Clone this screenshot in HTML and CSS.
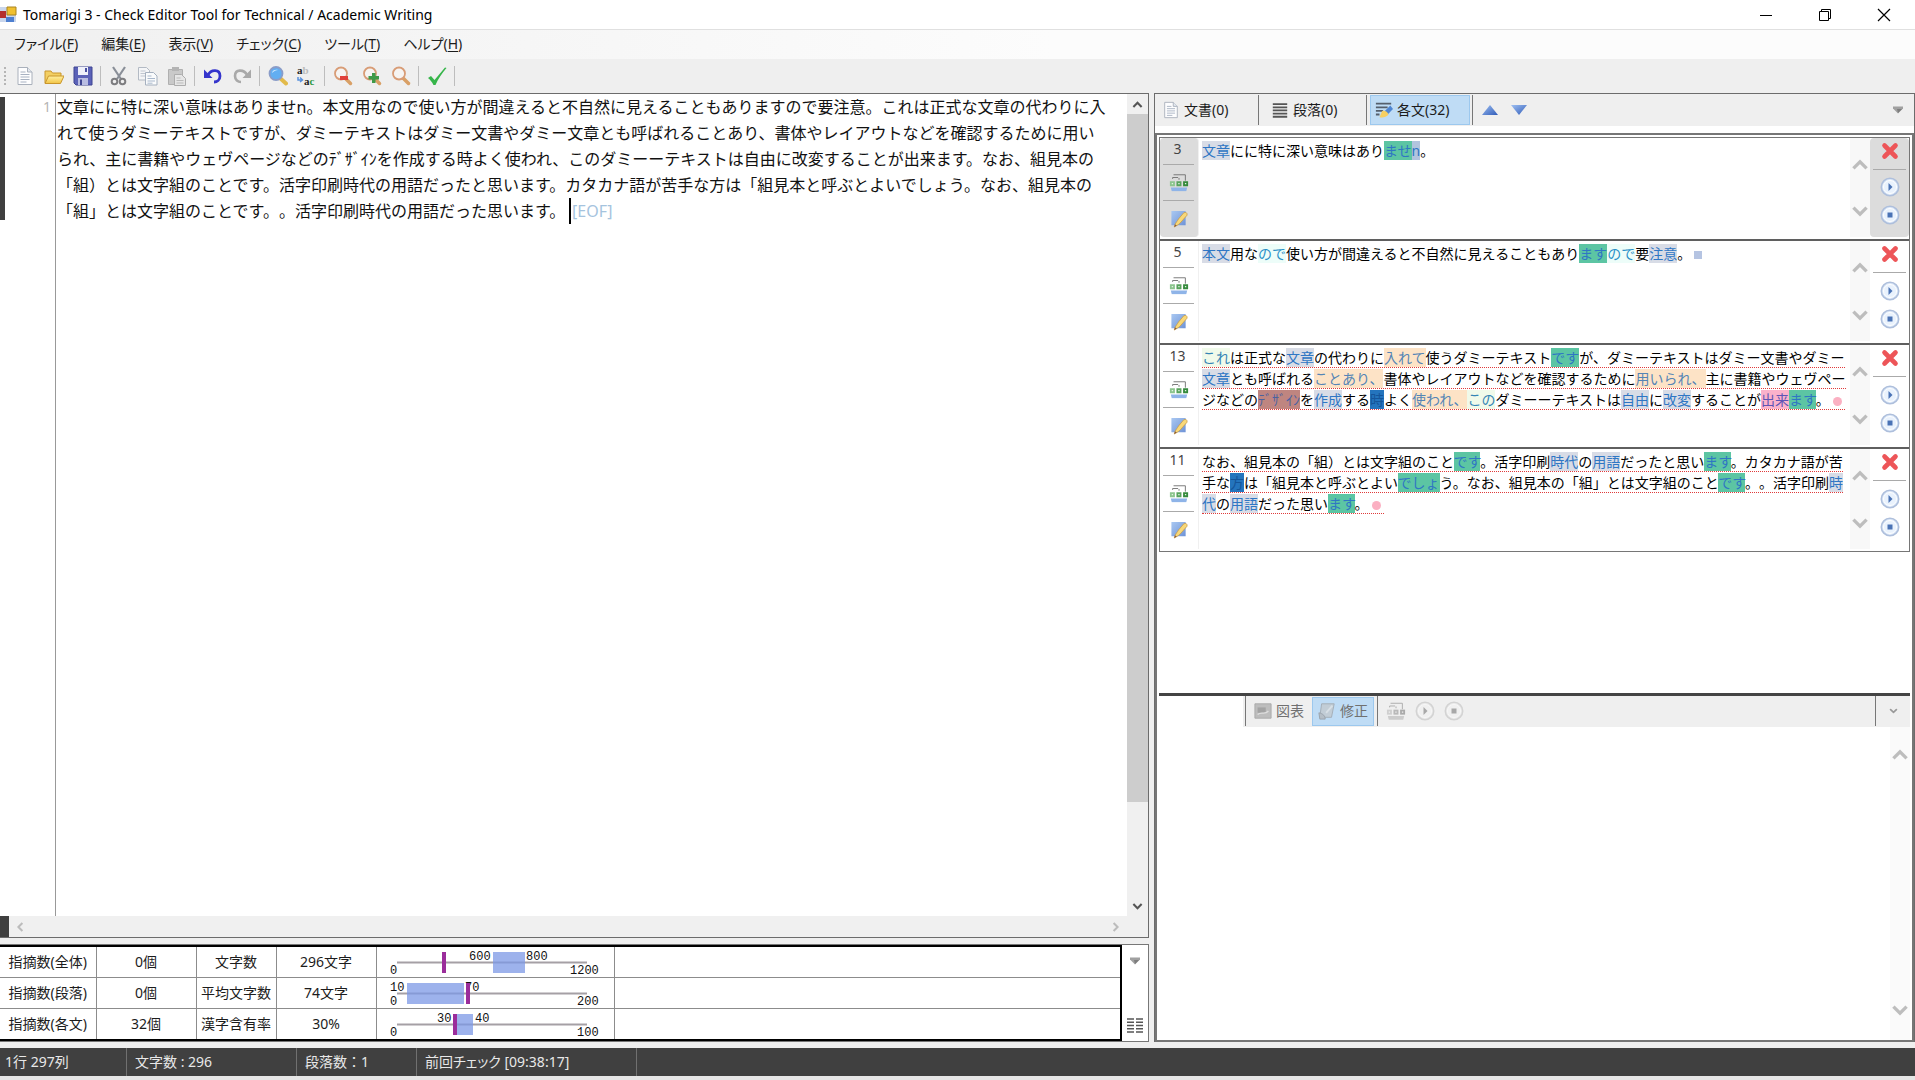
FILE: index.html
```html
<!DOCTYPE html>
<html lang="ja">
<head>
<meta charset="utf-8">
<title>Tomarigi 3 - Check Editor Tool for Technical / Academic Writing</title>
<link rel="stylesheet" href="styles.css">
</head>
<body>
<svg class="defs" aria-hidden="true">
  <defs>
    <linearGradient id="g-blue" x1="0" y1="0" x2="1" y2="1"><stop offset="0" stop-color="#a9c8f2"/><stop offset="1" stop-color="#6f93d6"/></linearGradient>
    <linearGradient id="g-folder" x1="0" y1="0" x2="0" y2="1"><stop offset="0" stop-color="#fff0a0"/><stop offset="1" stop-color="#f2c445"/></linearGradient>
    <linearGradient id="g-tri" x1="0" y1="0" x2="1" y2="1"><stop offset="0" stop-color="#9fc0f2"/><stop offset="1" stop-color="#2f5bb8"/></linearGradient>
    <symbol id="i-page" viewBox="0 0 20 20"><path d="M3 1.500h9.500l4.500 4.500v12.500H3z" fill="#fdfdfe" stroke="#a9b0bb"/><path d="M12.500 1.500V6H17" fill="#e3e8ef" stroke="#a9b0bb"/><path d="M5.500 6h5M5.500 8.500h9M5.500 11h9M5.500 13.500h9M5.500 16h6" stroke="#a8b2c2"/></symbol>
    <symbol id="i-scissors" viewBox="0 0 20 20"><path d="M4 1l8 12M16 1L8 13" stroke="#8a8f98" stroke-width="2.200" fill="none"/><circle cx="5.500" cy="15.500" r="2.800" fill="none" stroke="#7d7d80" stroke-width="2"/><circle cx="13.500" cy="15.500" r="2.800" fill="none" stroke="#7d7d80" stroke-width="2"/></symbol>
    <symbol id="i-lens" viewBox="0 0 20 20"><path d="M12 12l5.500 5.500" stroke="#d9a066" stroke-width="3.500" stroke-linecap="round"/><circle cx="8" cy="7.500" r="6" fill="#f6f4f2" stroke="#d89c76" stroke-width="1.800"/></symbol>
    <symbol id="i-tree" viewBox="0 0 22 20"><path d="M4 6V4.500h6M5 1.500h13V8M11 5v2" fill="none" stroke="#707070"/><path d="M1 8.500h5.500V14H1z" fill="#8cc58e"/><path d="M8.200 8.500h5.500V14H8.200z" fill="#58a35c"/><path d="M15.500 8.500H21V14h-5.500z" fill="#358a3c"/><path d="M3 10.500h1.500V12H3zM10.200 10.500h1.500V12h-1.500zM17.500 10.500H19V12h-1.500z" fill="#e4f4e2"/><path d="M2 15.500h18l-1 4H3z" fill="#8fb4e8"/></symbol>
    <symbol id="i-edit" viewBox="0 0 20 20"><path d="M2 2h15v15H2z" fill="url(#g-blue)"/><path d="M15 4c2-1 4 0 3.500 2.500L11 15c-2 2-4 2.500-6 4l1-3c1-2 2-3 3.500-5.500z" fill="#f8d878" stroke="#c79a45" stroke-width=".8"/><path d="M5 19l.7-3 2 1.500z" fill="#8a5a3a"/></symbol>
    <symbol id="i-cross" viewBox="0 0 18 18"><path d="M3.500 3.500l11 11M14.500 3.500l-11 11" stroke="#ed5558" stroke-width="4.600" stroke-linecap="round"/></symbol>
    <symbol id="i-play" viewBox="0 0 20 20"><circle cx="10" cy="10" r="8.700" fill="#dfebfa" stroke="#aebfdc" stroke-width="1.600"/><circle cx="10" cy="10" r="6.500" fill="#e9f2fd" stroke="#fff"/><path d="M8.500 6l4 4-4 4z" fill="#4a73b5"/></symbol>
    <symbol id="i-stop" viewBox="0 0 20 20"><circle cx="10" cy="10" r="8.700" fill="#dfebfa" stroke="#aebfdc" stroke-width="1.600"/><circle cx="10" cy="10" r="6.500" fill="#e9f2fd" stroke="#fff"/><path d="M7.500 7.500h5v5h-5z" fill="#4a73b5"/></symbol>
    <symbol id="i-up" viewBox="0 0 16 10"><path d="M2 8.500l6-6 6 6" fill="none" stroke="currentColor" stroke-width="3"/></symbol>
    <symbol id="i-down" viewBox="0 0 16 10"><path d="M2 1.500l6 6 6-6" fill="none" stroke="currentColor" stroke-width="3"/></symbol>
    <symbol id="i-more" viewBox="0 0 10 8"><path d="M0 .5h10v2L5 7.500 0 2.500z" fill="#a0a0a0"/><path d="M4 3h5L5 7z" fill="#7d7d7d"/></symbol>
  </defs>
</svg>

<div class="app">
  <header class="titlebar">
    <svg class="app-logo" viewBox="0 0 17 17"><path d="M0 1h16v15H0z" fill="#c9d6ec"/><path d="M0 5h6v7H0z" fill="#b5302c"/><path d="M7 1h9v8H7z" fill="#f0c030" stroke="#a98420"/><path d="M6 11h8v5H6z" fill="#4d7fd0"/></svg>
    <h1 class="title">Tomarigi 3 - Check Editor Tool for Technical / Academic Writing</h1>
    <div class="window-buttons">
      <button class="win-btn" aria-label="最小化"><svg viewBox="0 0 14 14"><path d="M1 7.500h12" stroke="#000"/></svg></button>
      <button class="win-btn" aria-label="元に戻す"><svg viewBox="0 0 14 14"><path d="M1.500 3.500h9v9h-9zM3.500 3.500v-2h9v9h-2" fill="none" stroke="#000"/></svg></button>
      <button class="win-btn" aria-label="閉じる"><svg viewBox="0 0 14 14"><path d="M1 1l12 12M13 1L1 13" stroke="#000" stroke-width="1.200"/></svg></button>
    </div>
  </header>

  <nav class="menubar">
    <button class="menu">ファイル(<u>F</u>)</button>
    <button class="menu">編集(<u>E</u>)</button>
    <button class="menu">表示(<u>V</u>)</button>
    <button class="menu">チェック(<u>C</u>)</button>
    <button class="menu">ツール(<u>T</u>)</button>
    <button class="menu">ヘルプ(<u>H</u>)</button>
  </nav>

  <div class="toolbar">
    <span class="grip"></span>
    <button class="tool" aria-label="新規"><svg viewBox="0 0 20 20"><use href="#i-page"/></svg></button>
    <button class="tool" aria-label="開く"><svg viewBox="0 0 20 20"><path d="M1 17V5h6l1.500 2H17v3" fill="#f3cf63" stroke="#c9962c"/><path d="M1 17.500L4.500 10H20l-3.500 7.500z" fill="url(#g-folder)" stroke="#c9962c"/></svg></button>
    <button class="tool" aria-label="保存"><svg viewBox="0 0 20 20"><path d="M1 1h18v18H3l-2-2z" fill="#5b62b8" stroke="#3f4592"/><path d="M5 1h10v8H5z" fill="#eef0fa"/><path d="M12 2h2v4h-2z" fill="#4a50a0"/><path d="M5 12h10v7H5z" fill="#b9bde2"/><path d="M7 13.500h2V19H7z" fill="#3f4592"/></svg></button>
    <span class="sep"></span>
    <button class="tool" aria-label="切り取り"><svg viewBox="0 0 20 20"><use href="#i-scissors"/></svg></button>
    <button class="tool" aria-label="コピー"><svg viewBox="0 0 20 20"><path d="M.5 1.500h8l3 3V14H.5z" fill="#f4f5f7" stroke="#b3bac4"/><path d="M2.500 5h5M2.500 7.500h5M2.500 10h5" stroke="#c0c6d0"/><path d="M7.500 6.500h8l3.500 3.500v9H7.500z" fill="#fafbfc" stroke="#a5b0bf"/><path d="M9.500 10h4M9.500 12.500h7.500M9.500 15h7.500M9.500 17.200h5" stroke="#a9b8cc"/></svg></button>
    <button class="tool" aria-label="貼り付け"><svg viewBox="0 0 20 20"><path d="M1.500 3.500h14v15h-14z" fill="#c9c9c9" stroke="#b0b0b0"/><path d="M5 1h7v4H5z" fill="#b4b4b4"/><path d="M7.500 8.500h7l4 4v7h-11z" fill="#e6e6e6" stroke="#adadad"/><path d="M9.500 12h4M9.500 14.500h7M9.500 17h7" stroke="#bbb"/></svg></button>
    <span class="sep"></span>
    <button class="tool" aria-label="元に戻す"><svg viewBox="0 0 20 20"><path d="M5 9c3-6 12-6 12 1 0 4-3 6-6 6" fill="none" stroke="#3535cc" stroke-width="2.800"/><path d="M1 3.500V12h8.500z" fill="#3535cc"/></svg></button>
    <button class="tool" aria-label="やり直し"><svg viewBox="0 0 20 20"><path d="M15 9C12 3 3 3 3 10c0 4 3 6 6 6" fill="none" stroke="#a9a9a9" stroke-width="2.600"/><path d="M19 3.500V12h-8.500z" fill="#a9a9a9"/></svg></button>
    <span class="sep"></span>
    <button class="tool" aria-label="検索"><svg viewBox="0 0 20 20"><path d="M12.500 12.500l5.500 5" stroke="#e2ba4a" stroke-width="4" stroke-linecap="round"/><circle cx="8" cy="7.500" r="6.500" fill="#62aef2" stroke="#8a9cc8" stroke-width="1.800"/><path d="M4 7c0-3 4-4 6-3-2 0-4 1-6 3z" fill="#d5eafe"/></svg></button>
    <button class="tool" aria-label="置換"><svg class="swap" viewBox="0 0 22 26"><text class="glyph" x="1" y="11" fill="#222">a<tspan fill="#bbb">b</tspan></text><text class="glyph" x="8" y="22" fill="#222">a<tspan fill="#2f9a45">c</tspan></text><path d="M2 14v3h4M4 14.500l2.500 2.500L4 19" fill="none" stroke="#5a92dd" stroke-width="1.500"/></svg></button>
    <span class="sep"></span>
    <button class="tool" aria-label="縮小"><svg viewBox="0 0 20 20"><use href="#i-lens"/><path d="M7 10h8v4H7z" fill="#e0413b"/></svg></button>
    <button class="tool" aria-label="拡大"><svg viewBox="0 0 20 20"><use href="#i-lens"/><path d="M10 7h3.500v3H17v3.500h-3.500V17H10v-3.500H6.500V10H10z" fill="#3f9a48"/></svg></button>
    <button class="tool" aria-label="等倍"><svg viewBox="0 0 20 20"><use href="#i-lens"/></svg></button>
    <span class="sep"></span>
    <button class="tool" aria-label="チェック"><svg viewBox="0 0 20 20"><path d="M1 12l3-2 3.500 4L18 1.500l1.500.5C15 7 11 13 8.500 19H6.500C5 16 3 13.500 1 12z" fill="#36b54a"/></svg></button>
    <span class="sep"></span>
  </div>

  <main class="workspace">
    <div class="left">
      <section class="editor">
        <div class="ruler"><span class="line-mark"></span><span class="line-no">1</span></div>
        <div class="paper">
          <textarea class="text" rows="5" wrap="off" spellcheck="false" aria-label="本文">文章にに特に深い意味はありませn。本文用なので使い方が間違えると不自然に見えることもありますので要注意。これは正式な文章の代わりに入
れて使うダミーテキストですが、ダミーテキストはダミー文書やダミー文章とも呼ばれることあり、書体やレイアウトなどを確認するために用い
られ、主に書籍やウェヴページなどのﾃﾞｻﾞｲﾝを作成する時よく使われ、このダミーーテキストは自由に改変することが出来ます。なお、組見本の
「組）とは文字組のことです。活字印刷時代の用語だったと思います。カタカナ語が苦手な方は「組見本と呼ぶとよいでしょう。なお、組見本の
「組」とは文字組のことです。。活字印刷時代の用語だった思います。</textarea>
          <span class="eof">[EOF]</span>
        </div>
        <div class="vscroll">
          <button class="arrow dark" aria-label="上へ"><svg viewBox="0 0 16 10"><use href="#i-up"/></svg></button>
          <div class="track"><span class="thumb"></span></div>
          <button class="arrow dark" aria-label="下へ"><svg viewBox="0 0 16 10"><use href="#i-down"/></svg></button>
        </div>
        <div class="hscroll">
          <span class="split"></span>
          <button class="harrow" aria-label="左へ"><svg viewBox="0 0 10 12"><path d="M8 1L3 6l5 5" fill="none" stroke="#bcbcbc" stroke-width="2.500"/></svg></button>
          <button class="harrow" aria-label="右へ"><svg viewBox="0 0 10 12"><path d="M2 1l5 5-5 5" fill="none" stroke="#bcbcbc" stroke-width="2.500"/></svg></button>
        </div>
      </section>

      <section class="stats">
        <table class="stat-table">
          <colgroup><col class="c1"><col class="c2"><col class="c3"><col class="c4"><col class="c5"><col></colgroup>
          <tbody>
          <tr><th>指摘数(全体)</th><td>0個</td><th>文字数</th><td>296文字</td>
            <td><svg class="range" viewBox="0 0 237 30"><path d="M20 15.500h190" class="axis"/><path d="M116 5h32v21h-32z" class="band"/><path d="M65 5h4v21h-4z" class="now"/><text x="92" y="13">600</text><text x="149" y="13">800</text><text x="13" y="27">0</text><text x="193" y="27">1200</text></svg></td><td></td></tr>
          <tr><th>指摘数(段落)</th><td>0個</td><th>平均文字数</th><td>74文字</td>
            <td><svg class="range" viewBox="0 0 237 30"><path d="M20 15.500h190" class="axis"/><path d="M30 5h57v21H30z" class="band"/><text x="13" y="13">10</text><text x="88" y="13">70</text><path d="M89 5h4v21h-4z" class="now"/><text x="13" y="27">0</text><text x="200" y="27">200</text></svg></td><td></td></tr>
          <tr><th>指摘数(各文)</th><td>32個</td><th>漢字含有率</th><td>30%</td>
            <td><svg class="range" viewBox="0 0 237 30"><path d="M20 15.500h190" class="axis"/><path d="M78 5h18v21H78z" class="band"/><path d="M76 5h4v21h-4z" class="now"/><text x="60" y="13">30</text><text x="98" y="13">40</text><text x="13" y="27">0</text><text x="200" y="27">100</text></svg></td><td></td></tr>
          </tbody>
        </table>
        <div class="stat-side">
          <button class="plain" aria-label="オプション"><svg class="more" viewBox="0 0 10 8"><use href="#i-more"/></svg></button>
          <button class="plain" aria-label="一覧"><svg class="grid-icon" viewBox="0 0 16 15"><path d="M0 1h7M9 1h7M0 4.200h7M9 4.200h7M0 7.500h7M9 7.500h7M0 10.700h7M9 10.700h7M0 14h7M9 14h7" stroke="#555" stroke-width="1.600"/></svg></button>
        </div>
      </section>
    </div>

    <div class="right">
      <div class="tabs">
        <button class="tab"><svg class="ic" viewBox="0 0 20 20"><use href="#i-page"/></svg>文書(0)</button>
        <span class="bar"></span>
        <button class="tab"><svg class="ic" viewBox="0 0 20 20"><path d="M2 3.500h16M2 7h16M2 10.500h16M2 14h16M2 17.500h16" stroke="#555" stroke-width="2"/></svg>段落(0)</button>
        <span class="bar"></span>
        <button class="tab on"><svg class="ic" viewBox="0 0 20 20"><path d="M1 3h17M1 7h13M1 11h8M1 15h4" stroke="#555f6c" stroke-width="2"/><path d="M17 5l3 4-7 7-4-3z" fill="#4f86d2"/><path d="M8 11c3-1 6 1 7 4-2 3-7 4-10 3z" fill="#f6cf62"/></svg>各文(32)</button>
        <span class="bar"></span>
        <button class="step" aria-label="前へ"><svg viewBox="0 0 16 10"><path d="M8 0l8 10H0z" fill="url(#g-tri)"/></svg></button>
        <button class="step" aria-label="次へ"><svg viewBox="0 0 16 10"><path d="M0 0h16L8 10z" fill="url(#g-tri)"/></svg></button>
        <button class="plain tail" aria-label="オプション"><svg class="more" viewBox="0 0 10 8"><use href="#i-more"/></svg></button>
      </div>

      <div class="frame">
        <div class="cards-pane">
          <div class="cards">
            <article class="card current">
              <div class="side lead"><span class="num">3</span><button aria-label="構造"><svg viewBox="0 0 22 20"><use href="#i-tree"/></svg></button><button aria-label="編集"><svg viewBox="0 0 20 20"><use href="#i-edit"/></svg></button></div>
              <p class="sentence"><mark class="noun">文章</mark>にに特に深い意味はあり<mark class="polite">ませ</mark><mark class="odd">n</mark>。</p>
              <div class="vscroll"><button class="arrow" aria-label="上へ"><svg viewBox="0 0 16 10"><use href="#i-up"/></svg></button><button class="arrow" aria-label="下へ"><svg viewBox="0 0 16 10"><use href="#i-down"/></svg></button></div>
              <div class="side act"><button class="del" aria-label="削除"><svg viewBox="0 0 18 18"><use href="#i-cross"/></svg></button><button aria-label="再生"><svg viewBox="0 0 20 20"><use href="#i-play"/></svg></button><button aria-label="停止"><svg viewBox="0 0 20 20"><use href="#i-stop"/></svg></button></div>
            </article>
            <article class="card">
              <div class="side lead"><span class="num">5</span><button aria-label="構造"><svg viewBox="0 0 22 20"><use href="#i-tree"/></svg></button><button aria-label="編集"><svg viewBox="0 0 20 20"><use href="#i-edit"/></svg></button></div>
              <p class="sentence"><mark class="noun">本文</mark>用な<mark class="conj">ので</mark>使い方が間違えると不自然に見えることもあり<mark class="polite">ます</mark><mark class="conj">ので</mark>要<mark class="noun">注意</mark>。<i class="flag square"></i></p>
              <div class="vscroll"><button class="arrow" aria-label="上へ"><svg viewBox="0 0 16 10"><use href="#i-up"/></svg></button><button class="arrow" aria-label="下へ"><svg viewBox="0 0 16 10"><use href="#i-down"/></svg></button></div>
              <div class="side act"><button class="del" aria-label="削除"><svg viewBox="0 0 18 18"><use href="#i-cross"/></svg></button><button aria-label="再生"><svg viewBox="0 0 20 20"><use href="#i-play"/></svg></button><button aria-label="停止"><svg viewBox="0 0 20 20"><use href="#i-stop"/></svg></button></div>
            </article>
            <article class="card">
              <div class="side lead"><span class="num">13</span><button aria-label="構造"><svg viewBox="0 0 22 20"><use href="#i-tree"/></svg></button><button aria-label="編集"><svg viewBox="0 0 20 20"><use href="#i-edit"/></svg></button></div>
              <p class="sentence"><span class="long"><mark class="ref">これ</mark>は正式な<mark class="noun">文章</mark>の代わりに<mark class="verb">入れて</mark>使うダミーテキスト<mark class="polite">です</mark>が、ダミーテキストはダミー文書やダミー<br><mark class="noun">文章</mark>とも呼ばれる<mark class="verb">ことあり、</mark>書体やレイアウトなどを確認するために<mark class="verb">用いられ、</mark>主に書籍やウェヴペー<br>ジなどの<mark class="half">ﾃﾞｻﾞｲﾝ</mark>を<mark class="noun">作成</mark>する<mark class="kanji">時</mark>よく<mark class="verb">使われ、</mark><mark class="ref">この</mark>ダミーーテキストは<mark class="noun">自由</mark>に<mark class="noun">改変</mark>することが<mark class="able">出来</mark><mark class="polite">ます</mark>。<i class="flag dot"></i></span></p>
              <div class="vscroll"><button class="arrow" aria-label="上へ"><svg viewBox="0 0 16 10"><use href="#i-up"/></svg></button><button class="arrow" aria-label="下へ"><svg viewBox="0 0 16 10"><use href="#i-down"/></svg></button></div>
              <div class="side act"><button class="del" aria-label="削除"><svg viewBox="0 0 18 18"><use href="#i-cross"/></svg></button><button aria-label="再生"><svg viewBox="0 0 20 20"><use href="#i-play"/></svg></button><button aria-label="停止"><svg viewBox="0 0 20 20"><use href="#i-stop"/></svg></button></div>
            </article>
            <article class="card">
              <div class="side lead"><span class="num">11</span><button aria-label="構造"><svg viewBox="0 0 22 20"><use href="#i-tree"/></svg></button><button aria-label="編集"><svg viewBox="0 0 20 20"><use href="#i-edit"/></svg></button></div>
              <p class="sentence"><span class="long">なお、組見本の「組）とは文字組のこと<mark class="polite">です</mark>。活字印刷<mark class="noun">時代</mark>の<mark class="noun">用語</mark>だったと思い<mark class="polite">ます</mark>。カタカナ語が苦<br>手な<mark class="kanji">方</mark>は「組見本と呼ぶとよい<mark class="polite">でしょ</mark>う。なお、組見本の「組」とは文字組のこと<mark class="polite">です</mark>。。活字印刷<mark class="noun">時</mark><br><mark class="noun">代</mark>の<mark class="noun">用語</mark>だった思い<mark class="polite">ます</mark>。<i class="flag dot"></i></span></p>
              <div class="vscroll"><button class="arrow" aria-label="上へ"><svg viewBox="0 0 16 10"><use href="#i-up"/></svg></button><button class="arrow" aria-label="下へ"><svg viewBox="0 0 16 10"><use href="#i-down"/></svg></button></div>
              <div class="side act"><button class="del" aria-label="削除"><svg viewBox="0 0 18 18"><use href="#i-cross"/></svg></button><button aria-label="再生"><svg viewBox="0 0 20 20"><use href="#i-play"/></svg></button><button aria-label="停止"><svg viewBox="0 0 20 20"><use href="#i-stop"/></svg></button></div>
            </article>
          </div>
        </div>

        <section class="fix-pane">
          <div class="fix-bar">
            <span class="blank"></span>
            <span class="bar"></span>
            <button class="tab dim"><svg class="ic" viewBox="0 0 20 20"><path d="M1 2h18v16H1z" fill="#bdbdbd" stroke="#a8a8a8"/><path d="M4 6h9v6H4z" fill="#a3a3a3"/><path d="M4 14c4-4 8 1 12-4" fill="none" stroke="#dedede" stroke-width="1.500"/></svg>図表</button>
            <button class="tab dim on"><svg class="ic" viewBox="0 0 20 20"><path d="M4 2h14l-3 15H2z" fill="#c2cdd6" stroke="#a3acb4"/><path d="M1 12c5 1 7 4 7 7H2z" fill="#b5bec6" stroke="#98a2aa"/><path d="M9 12l7-8" stroke="#d8e0e6" stroke-width="2"/></svg>修正</button>
            <span class="bar"></span>
            <div class="grays">
              <button aria-label="構造" disabled><svg viewBox="0 0 22 20"><use href="#i-tree"/></svg></button>
              <button aria-label="再生" disabled><svg viewBox="0 0 20 20"><use href="#i-play"/></svg></button>
              <button aria-label="停止" disabled><svg viewBox="0 0 20 20"><use href="#i-stop"/></svg></button>
            </div>
            <span class="bar push"></span>
            <button class="plain fold" aria-label="たたむ"><svg viewBox="0 0 16 10"><use href="#i-down"/></svg></button>
          </div>
          <div class="fix-body">
            <textarea class="fix-text" aria-label="修正"></textarea>
            <div class="vscroll"><button class="arrow" aria-label="上へ"><svg viewBox="0 0 16 10"><use href="#i-up"/></svg></button><button class="arrow" aria-label="下へ"><svg viewBox="0 0 16 10"><use href="#i-down"/></svg></button></div>
          </div>
        </section>
      </div>
    </div>
  </main>

  <footer class="status">
    <span class="s1">1行 297列</span>
    <span class="s2">文字数 : 296</span>
    <span class="s3">段落数：1</span>
    <span class="s4">前回チェック [09:38:17]</span>
  </footer>
</div>
</body>
</html>
```

FILE: styles.css
```css
* { box-sizing: border-box; }

body {
  margin: 0;
  font: 14px/20px "Noto Sans", "Noto Sans CJK JP", sans-serif;
  color: #1c1c1c;
  background: #efefef;
  text-spacing-trim: space-all;
}

button {
  margin: 0;
  padding: 0;
  border: 0;
  background: none;
  font: inherit;
  color: inherit;
  display: flex;
  align-items: center;
  justify-content: center;
}

svg { display: block; }
.defs { position: absolute; width: 0; height: 0; }

.app { display: flex; flex-direction: column; min-height: 100vh; }

/* title bar */
.titlebar { display: flex; align-items: center; height: 29px; background: #fff; }
.app-logo { width: 17px; height: 17px; }
.title { margin: 0 0 0 6px; font-size: 14px; font-weight: 400; line-height: 28px; color: #000; }
.window-buttons { display: flex; margin: 0 2px 0 auto; }
.win-btn { width: 59px; height: 28px; }
.win-btn svg { width: 14px; height: 14px; }

/* menu */
.menubar {
  display: flex;
  height: 30px;
  padding-bottom: 2px;
  border-top: 1px solid #e0e0e0;
  background: linear-gradient(90deg, #f0f0f0, #fcfcfc 55%);
  font-feature-settings: "palt";
}
.menu { padding: 0 11px 0 12px; }
.menu:first-child { padding-left: 14px; }
.menu u { text-underline-offset: 2px; }

/* tool bar */
.toolbar { display: flex; align-items: center; height: 34px; padding-bottom: 1px; }
.grip { width: 2px; height: 18px; margin: 0 4px; background: repeating-linear-gradient(#b5b5b5 0 2px, transparent 2px 4px); }
.tool { width: 29px; height: 28px; }
.tool svg { width: 20px; height: 20px; }
.tool .swap { width: 22px; height: 26px; }
.glyph { font: bold 11px "Liberation Serif", serif; }
.sep { width: 1px; height: 20px; margin: 0 3px; background: #bdbdbd; }

/* main split */
.workspace {
  flex: 1;
  display: grid;
  grid-template-columns: minmax(0, 1149fr) minmax(0, 761fr);
  gap: 5px;
  margin-bottom: 6px;
}
.left { display: flex; flex-direction: column; gap: 6px; }

.editor {
  flex: 1;
  display: grid;
  grid-template-columns: 56px minmax(0, 1fr) 21px;
  grid-template-rows: 1fr 21px;
  border: solid #6c6c6c;
  border-width: 1px 1px 1px 0;
  background: #fff;
}
.ruler { display: flex; justify-content: space-between; padding-right: 4px; border-right: 1px solid #999; }
.line-mark { width: 5px; height: 123px; margin-top: 3px; background: #3f3f3f; }
.line-no { font-size: 14px; line-height: 26px; color: #b5b5b5; }
.paper { position: relative; font-size: 16px; line-height: 26px; }
.text {
  display: block;
  width: 100%;
  margin: 0;
  padding: 0 0 0 1px;
  border: 0;
  outline: 0;
  resize: none;
  overflow: hidden;
  background: none;
  font: inherit;
  color: #111;
  text-spacing-trim: inherit;
}
.eof {
  position: absolute;
  top: 104px;
  left: calc(32em + 1px);
  padding-left: 1px;
  border-left: 2px solid #000;
  color: #a5c3de;
}

.vscroll { display: flex; flex-direction: column; background: #f0f0f0; color: #bdbdbd; }
.arrow { height: 20px; }
.arrow svg { width: 18px; height: 11px; }
.arrow.dark { color: #555; }
.arrow.dark svg { width: 11px; height: 7px; }
.track { flex: 1; }
.thumb { display: block; height: 88%; background: #cdcdcd; }

.hscroll { grid-column: 1 / -1; display: flex; padding-right: 22px; background: #f0f0f0; }
.split { width: 9px; background: #3f3f3f; }
.harrow { width: 21px; }
.harrow + .harrow { margin-left: auto; }
.harrow svg { width: 8px; height: 10px; }

/* statistics */
.stats { display: flex; border: solid #777; border-width: 1px 1px 1px 0; background: #fff; }
.stat-table {
  flex: 1;
  table-layout: fixed;
  border-collapse: collapse;
  border: solid #000;
  border-width: 2px 2px 2px 0;
}
.c1 { width: 96px; }
.c2 { width: 100px; }
.c3 { width: 80px; }
.c4 { width: 100px; }
.c5 { width: 238px; }
.stat-table th, .stat-table td {
  height: 31px;
  padding: 0;
  border: solid #8c8c8c;
  border-width: 1px 1px 0 0;
  font-weight: 400;
  text-align: center;
  white-space: nowrap;
}
.stat-table tr:first-child > * { border-top: 0; }
.range { width: 100%; height: 30px; overflow: visible; font: 12px "Liberation Mono", monospace; fill: #111; stroke: none; }
.range .axis { stroke: #a5a0a5; stroke-width: 2; }
.range .band { fill: #7c98e6; fill-opacity: .75; }
.range .now { fill: #9b2d9b; }
.stat-side { width: 26px; display: flex; flex-direction: column; justify-content: space-between; align-items: center; padding: 12px 0 8px; }
.more { width: 10px; height: 8px; }
.grid-icon { width: 16px; height: 15px; }

/* right side */
.right { display: flex; flex-direction: column; border: solid #6c6c6c; border-width: 1px 1px 0; background: #fff; }
.tabs, .fix-bar { display: flex; align-items: center; background: #efefef; }
.tabs { height: 32px; margin-bottom: 7px; }
.tab { height: 30px; gap: 4px; border: 1px solid transparent; }
.tab .ic { width: 18px; height: 18px; }
.tabs .tab { width: 103px; padding-left: 6px; justify-content: flex-start; }
.tabs .bar + .tab { padding-left: 11px; }
.tabs .tab.on { width: 100px; margin: 0 2px 0 3px; padding-left: 4px; }
.tab.on { background: #bfdcf5; border-color: #9cc8ee; }
.bar { width: 1px; height: 30px; background: #777; }
.tabs .bar + .tab:not(.on) { width: 107px; }
.step { width: 29px; height: 30px; margin-left: 2px; }
.step + .step { margin-left: 0; }
.step svg { width: 16px; height: 10px; }
.tail { margin: 0 11px 0 auto; }

.frame { flex: 1; display: flex; flex-direction: column; border: 2px solid #767676; padding: 0 2px; }
.cards-pane { flex: 558 0 0; padding-top: 2px; }
.cards { border: 1px solid #767676; }
.card { display: flex; height: 104px; border-top: 2px solid #5f5f5f; padding-bottom: 2px; }
.card:first-child { height: 101px; border-top: 0; }
.side { width: 39px; display: flex; flex-direction: column; align-items: stretch; border-right: 1px solid #f0f0f0; }
.current .side { background: #dcdcdc; border-radius: 4px; }
.num { height: 26px; padding: 1px 3px 0 0; text-align: center; color: #444; }
.lead button { height: 36px; margin: 0 4px 0 3px; border-top: 1px solid #aaa; }
.lead svg { width: 20px; height: 19px; }
.sentence {
  flex: 1;
  min-width: 0;
  margin: 0;
  padding: 2px 0 0 3px;
  line-height: 21px;
  white-space: nowrap;
  color: #000;
}
.card .vscroll { width: 20px; justify-content: space-between; padding: 16px 0; background: #f8f8f8; }
.act { border: 0; padding-bottom: 8px; }
.act button { height: 29px; }
.act .del { height: 33px; margin: 0 3px 3px; padding-bottom: 6px; border-bottom: 1px solid #aaa; }
.act svg { width: 20px; height: 20px; }
.act .del svg { width: 18px; height: 18px; }

mark { background: none; color: #2f76c4; }
.noun { background: #d8dce6; }
.polite { background: #5cc5a3; }
.odd { background: #b2c4de; }
.conj { background: #edfdf9; color: #2a90c8; }
.verb { background: #fde3c6; color: #5585b5; }
.ref { background: #f0faea; color: #3585b5; }
.half { background: #bf8580; color: #4b62a0; }
.kanji { background: #2474bd; color: #15559a; }
.able { background: #fbb2cb; color: #5f55b5; }
.long { border-bottom: 1px dotted #e03a3a; }
.flag { display: inline-block; margin-left: 3px; vertical-align: middle; }
.square { width: 8px; height: 8px; background: #b5c4e2; }
.dot { width: 9px; height: 9px; margin-right: 3px; border-radius: 50%; background: #fbb0c2; }

/* correction pane */
.fix-pane { flex: 346 0 0; display: flex; flex-direction: column; border-top: 3px solid #444; }
.fix-bar { height: 31px; }
.blank { align-self: stretch; width: 84px; background: #fff; margin-right: 2px; }
.dim { color: #707070; width: 62px; height: 29px; margin-left: 2px; }
.dim + .dim + .bar { margin-left: 3px; }
.grays { display: flex; margin-left: 3px; filter: grayscale(1); opacity: .55; }
.grays button { width: 29px; height: 28px; }
.grays svg { width: 20px; height: 20px; }
.push { margin-left: auto; }
.fold { width: 34px; color: #999; }
.fold svg { width: 9px; height: 6px; }
.fix-body { flex: 1; display: flex; }
.fix-text { flex: 1; margin: 0; padding: 4px; border: 0; outline: 0; resize: none; background: #fff; font: inherit; }
.fix-body .vscroll { width: 20px; justify-content: space-between; padding: 18px 0 20px; background: #fafafa; }

/* status bar */
.status {
  display: flex;
  height: 32px;
  border-bottom: 4px solid #e6e6e6;
  background: #404040;
  color: #e8e8e8;
  font-feature-settings: "palt";
  line-height: 28px;
}
.status span { padding-left: 8px; border-right: 1px solid #707070; white-space: nowrap; }
.status .s1 { width: 127px; padding-left: 5px; }
.status .s2 { width: 170px; }
.status .s3 { width: 120px; font-feature-settings: normal; }
.status .s4 { width: 220px; }
```
